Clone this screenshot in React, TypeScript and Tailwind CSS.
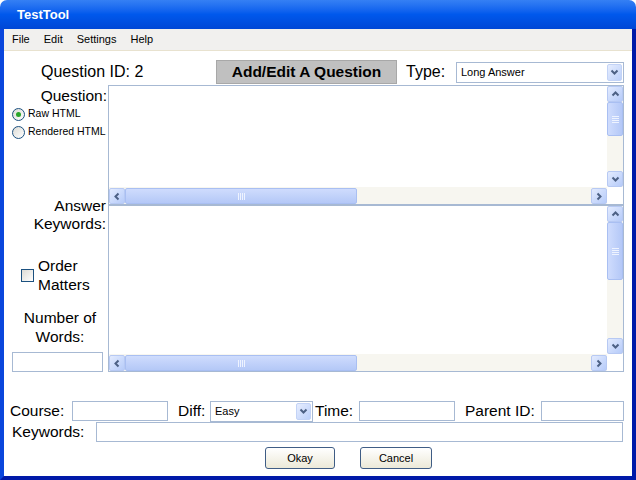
import React from 'react';

const font = { fontFamily: '"Liberation Sans", Arial, sans-serif' };

function Chevron({ dir }: { dir: 'up' | 'down' | 'left' | 'right' }) {
  const d =
    dir === 'up'
      ? 'M1.5 5.5 L4.5 2.5 L7.5 5.5'
      : dir === 'down'
        ? 'M1.5 2.5 L4.5 5.5 L7.5 2.5'
        : dir === 'left'
          ? 'M5.5 1.5 L2.5 4.5 L5.5 7.5'
          : 'M2.5 1.5 L5.5 4.5 L2.5 7.5';
  return (
    <svg width="9" height="9" viewBox="0 0 9 9">
      <path d={d} fill="none" stroke="#4d6185" strokeWidth="2" />
    </svg>
  );
}

function SBtn({ dir }: { dir: 'up' | 'down' | 'left' | 'right' }) {
  return (
    <div className="flex w-[16px] h-[16px] shrink-0 items-center justify-center rounded-[2px] border border-[#b7c9f3] bg-linear-to-br from-[#e3ebfe] to-[#b6cbf9]">
      <Chevron dir={dir} />
    </div>
  );
}

function VScroll({ thumbH }: { thumbH: number }) {
  return (
    <div className="flex h-full w-[16px] flex-col bg-[#f7f6f0]">
      <SBtn dir="up" />
      <div className="relative flex-1">
        <div
          className="absolute top-0 left-0 flex w-[16px] flex-col items-center justify-center gap-[1px] rounded-[2px] border border-[#a9bff2] bg-linear-to-r from-[#cfdcfd] to-[#b4c8f7]"
          style={{ height: thumbH }}
        >
          <div className="h-[1px] w-[7px] bg-[#eef3ff]" />
          <div className="h-[1px] w-[7px] bg-[#eef3ff]" />
          <div className="h-[1px] w-[7px] bg-[#eef3ff]" />
          <div className="h-[1px] w-[7px] bg-[#eef3ff]" />
        </div>
      </div>
      <SBtn dir="down" />
    </div>
  );
}

function HScroll() {
  return (
    <div className="flex h-[16px] w-full bg-[#f7f6f0]">
      <SBtn dir="left" />
      <div className="relative flex-1">
        <div className="absolute top-0 left-0 flex h-[16px] w-[232px] items-center justify-center gap-[1px] rounded-[2px] border border-[#a9bff2] bg-linear-to-b from-[#cfdcfd] to-[#b4c8f7]">
          <div className="h-[7px] w-[1px] bg-[#eef3ff]" />
          <div className="h-[7px] w-[1px] bg-[#eef3ff]" />
          <div className="h-[7px] w-[1px] bg-[#eef3ff]" />
          <div className="h-[7px] w-[1px] bg-[#eef3ff]" />
        </div>
      </div>
      <SBtn dir="right" />
    </div>
  );
}

function TextBox({ h, thumbH }: { h: string; thumbH: number }) {
  return (
    <div className={`grid w-[516px] ${h} grid-cols-[1fr_16px] grid-rows-[1fr_17px] border border-[#a7b9d3] bg-white`}>
      <div className="bg-white" />
      <VScroll thumbH={thumbH} />
      <div className="pt-[1px] bg-[#f7f6f0]">
        <HScroll />
      </div>
      <div className="bg-white" />
    </div>
  );
}

function Select({ value, w }: { value: string; w: string }) {
  return (
    <div className={`flex ${w} h-[21px] items-center border border-[#a7b9d3] bg-white`}>
      <span className="flex-1 pl-[4px] text-[11px]">{value}</span>
      <div className="mr-[1px] flex h-[17px] w-[15px] items-center justify-center rounded-[2px] border border-[#c3d3f6] bg-linear-to-br from-[#e6edfe] to-[#bcd0fa]">
        <Chevron dir="down" />
      </div>
    </div>
  );
}

function Radio({ checked, label }: { checked?: boolean; label: string }) {
  return (
    <div className="flex h-[18px] items-center whitespace-nowrap pl-[8px]">
      <div className="flex h-[13px] w-[13px] shrink-0 items-center justify-center rounded-full border border-[#1c5180] bg-linear-to-br from-[#dcdbd5] to-white">
        {checked && <div className="h-[5px] w-[5px] rounded-full bg-[#2aa52a]" />}
      </div>
      <span className="ml-[3px] text-[10.5px]">{label}</span>
    </div>
  );
}

function Input({ w }: { w: string }) {
  return <div className={`${w} h-[20px] shrink-0 border border-[#a7b9d3] bg-white`} />;
}

function Button({ label, w }: { label: string; w: string }) {
  return (
    <div className={`flex ${w} h-[22px] items-center justify-center rounded-[3px] border border-[#3f5d85] bg-linear-to-b from-white to-[#ece9d8] text-[11px]`}>
      {label}
    </div>
  );
}

export default function App() {
  return (
    <div className="flex h-[480px] w-[636px] flex-col overflow-hidden bg-white text-black" style={font}>
      <div className="flex h-[29px] shrink-0 items-center rounded-t-[7px] bg-linear-to-b from-[#3580f4] via-[#0058ec] to-[#0047d6] pl-[17px]">
        <span className="text-[13px] font-bold text-white">TestTool</span>
      </div>

      <div className="flex flex-1 flex-col border-r-[4px] border-b-[4px] border-l-[4px] border-r-[#0019a8] border-b-[#0019a8] border-l-[#0a46dc]">
        <div className="flex h-[22px] shrink-0 items-center gap-[14px] border-b border-[#e8e2cf] bg-[#f1f0ee] pl-[8px] text-[11px]">
          <span>File</span>
          <span>Edit</span>
          <span>Settings</span>
          <span>Help</span>
        </div>

        <div className="flex flex-1 flex-col bg-white">
          <div className="mt-[9px] flex h-[24px] items-center">
            <span className="w-[212px] pl-[37px] text-[16px]">Question ID: 2</span>
            <div className="flex h-[24px] w-[181px] items-center justify-center border border-[#a8a8a8] bg-[#c0c0c0] text-[15.5px] font-bold">
              Add/Edit A Question
            </div>
            <span className="w-[59px] pl-[9px] text-[16px]">Type:</span>
            <Select value="Long Answer" w="w-[168px]" />
          </div>

          <div className="mt-[1px] flex">
            <div className="flex w-[104px] shrink-0 flex-col">
              <div className="mt-[2px] pr-[1px] text-right text-[15.5px] leading-[18px]">Question:</div>
              <Radio checked label="Raw HTML" />
              <Radio label="Rendered HTML" />
              <div className="mt-[56px] pr-[2px] text-right text-[15.5px] leading-[18px]">
                Answer
                <br />
                Keywords:
              </div>
              <div className="mt-[23px] flex items-center pl-[17px]">
                <div className="h-[13px] w-[13px] border border-[#1c5180] bg-linear-to-br from-[#dcdbd5] to-white" />
                <span className="ml-[4px] text-[15.5px] leading-[19px]">
                  Order
                  <br />
                  Matters
                </span>
              </div>
              <div className="mt-[14px] pl-[8px] text-center text-[15.5px] leading-[19px]">
                Number of
                <br />
                Words:
              </div>
              <div className="mt-[6px] ml-[8px]">
                <Input w="w-[91px]" />
              </div>
            </div>
            <div className="flex flex-col">
              <TextBox h="h-[120px]" thumbH={34} />
              <TextBox h="h-[167px]" thumbH={58} />
            </div>
          </div>

          <div className="mt-[29px] flex h-[20px] items-center pl-[6px] text-[15.5px]">
            <span className="w-[62px]">Course:</span>
            <Input w="w-[96px]" />
            <span className="w-[42px] pl-[10px]">Diff:</span>
            <Select value="Easy" w="w-[103px]" />
            <span className="w-[46px] pl-[2px]">Time:</span>
            <Input w="w-[96px]" />
            <span className="w-[86px] pl-[10px]">Parent ID:</span>
            <Input w="w-[83px]" />
          </div>

          <div className="mt-[1px] flex h-[20px] items-center pl-[8px] text-[15.5px]">
            <span className="w-[84px]">Keywords:</span>
            <Input w="w-[527px]" />
          </div>

          <div className="mt-[5px] flex gap-[25px] pl-[261px]">
            <Button label="Okay" w="w-[70px]" />
            <Button label="Cancel" w="w-[72px]" />
          </div>
        </div>
      </div>
    </div>
  );
}
